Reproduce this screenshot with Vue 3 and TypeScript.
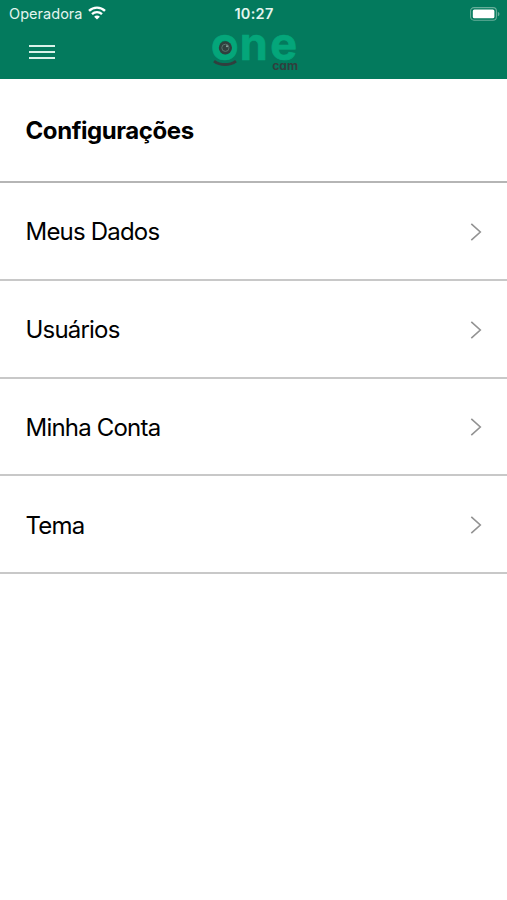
<script setup lang="ts">
interface SettingItem {
  id: string
  label: string
}

const items: SettingItem[] = [
  { id: 'data', label: 'Meus Dados' },
  { id: 'users', label: 'Usuários' },
  { id: 'account', label: 'Minha Conta' },
  { id: 'theme', label: 'Tema' },
]
</script>

<template>
  <div class="screen">
    <header class="header">
      <div class="status">
        <div class="carrier">
          <span>Operadora</span>
          <svg class="wifi" width="18" height="14" viewBox="0 0 18 14" fill="none" stroke="#fff">
            <path d="M1 4.9C5.5.5 12.5.5 17 4.9" stroke-width="2.4" />
            <path d="M4 8.1c2.8-2.7 7.2-2.7 10 0" stroke-width="2.3" />
            <path d="M9 13.6 6.1 10.7c1.6-1.6 4.2-1.6 5.8 0Z" fill="#fff" stroke="none" />
          </svg>
        </div>
        <span class="time">10:27</span>
        <svg class="battery" width="30" height="14" viewBox="0 0 30 14">
          <rect x=".6" y=".6" width="25.8" height="12.6" rx="3.4" fill="none" stroke="#68ae9a" stroke-width="1.1" />
          <rect x="2.8" y="2.5" width="21.6" height="8.8" rx="1.6" fill="#fff" />
          <path d="M27.8 4.7c2.2.8 2.2 3.8 0 4.6Z" fill="#68ae9a" />
        </svg>
      </div>
      <div class="toolbar">
        <button class="menu" type="button" aria-label="Menu">
          <svg width="26" height="16" viewBox="0 0 26 16" stroke="#d9f2e9" stroke-width="1.8">
            <path d="M0 2h26M0 8h26M0 14h26" />
          </svg>
        </button>
        <svg class="logo" width="90" height="46" viewBox="0 0 90 46">
          <text class="brand" x="1.9 30.8 61.2" y="33.2">one</text>
          <circle cx="16.4" cy="20.8" r="6.6" fill="#303f3e" />
          <circle cx="16.4" cy="20.8" r="3.6" fill="none" stroke="#58736d" stroke-width="1" />
          <circle cx="18" cy="19.2" r="1" fill="#8fa8a2" />
          <path d="M5 34.1c6.4 4.6 15.6 4.6 22 0" fill="none" stroke="#303f3e" stroke-width="3" />
          <text class="sub" x="63.2" y="42.6" textLength="26" lengthAdjust="spacingAndGlyphs">cam</text>
        </svg>
      </div>
    </header>
    <main>
      <h1 class="title">Configurações</h1>
      <ul class="list">
        <li v-for="item in items" :key="item.id" class="row">
          <span class="label">{{ item.label }}</span>
          <svg width="12" height="18" viewBox="0 0 12 18" fill="none" stroke="#929292" stroke-width="1.6">
            <path d="m1.3.9 9 8.1-9 8.1" />
          </svg>
        </li>
      </ul>
    </main>
  </div>
</template>

<style>
body {
  background: #fff;
}
</style>

<style scoped>
.screen {
  min-height: 900px;
  background: #fff;
  font-family: Inter, "Liberation Sans", sans-serif;
  color: #000;
}
.header {
  height: 79px;
  background: #037a5d;
}
.status {
  display: grid;
  grid-template-columns: 1fr auto 1fr;
  align-items: center;
  height: 27px;
  padding: 0 8px 0 9px;
  color: #e3f5ef;
}
.carrier {
  display: flex;
  align-items: center;
  gap: 5px;
  font-size: 14.5px;
  letter-spacing: 0.04px;
}
.wifi {
  margin-top: -2px;
}
.time {
  font-size: 14.5px;
  font-weight: 600;
  letter-spacing: 0.3px;
}
.battery {
  justify-self: end;
  margin-right: -1px;
}
.toolbar {
  display: grid;
  grid-template-columns: 1fr auto 1fr;
  height: 46px;
  padding: 0 29px;
}
.menu {
  justify-self: start;
  align-self: start;
  margin: 17px 0 0;
  padding: 0;
  border: 0;
  background: none;
}
.menu svg {
  display: block;
}
.logo {
  overflow: visible;
}
.brand {
  font-size: 45px;
  font-weight: 700;
  fill: #04a67a;
  stroke: #04a67a;
  stroke-width: 0.7px;
}
.sub {
  font-size: 11.5px;
  font-weight: 700;
  font-feature-settings: "cv11";
  fill: #303f3e;
}
.title {
  box-sizing: border-box;
  height: 104px;
  margin: 0;
  padding-left: 25.5px;
  border-bottom: 2px solid #b5b5b5;
  font-size: 24px;
  font-weight: 700;
  line-height: 103px;
  letter-spacing: -0.42px;
}
.list {
  margin: 0;
  padding: 0;
  list-style: none;
}
.row {
  box-sizing: border-box;
  display: flex;
  align-items: center;
  justify-content: space-between;
  height: 97.75px;
  padding: 2px 25px 0 25.5px;
  border-bottom: 2px solid #c8c8c8;
  font-size: 24px;
  letter-spacing: -0.8px;
}
</style>
